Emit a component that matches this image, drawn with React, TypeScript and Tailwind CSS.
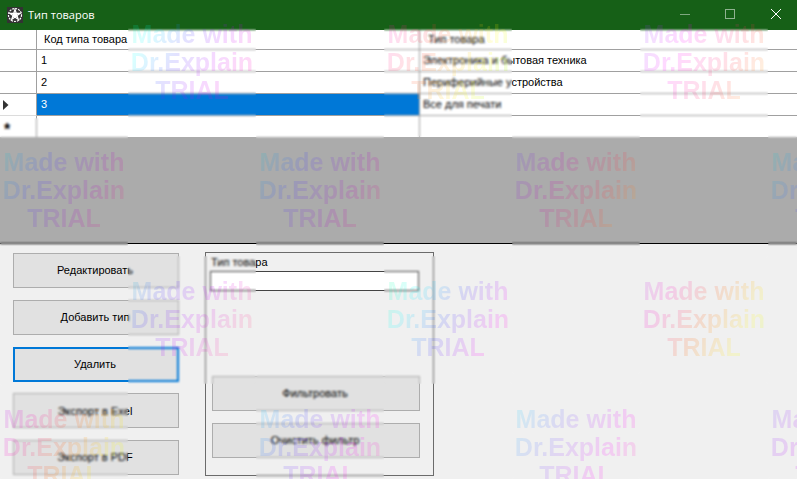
const rows = [
  { id: "1", name: "Электроника и бытовая техника" },
  { id: "2", name: "Периферийные устройства" },
  { id: "3", name: "Все для печати", selected: true },
];

const sideButtons = ["Редактировать", "Добавить тип", "Удалить", "Экспорт в Exel", "Экспорт в PDF"];

// places where the watermark blurs what lies under it
const blurTiles = [
  "left-[128px] top-[26px] h-[111px]",
  "left-[384px] top-[26px] h-[111px]",
  "left-[640px] top-[26px] h-[111px]",
  "left-0 top-[118px] h-[132px]",
  "left-[256px] top-[118px] h-[132px]",
  "left-[512px] top-[118px] h-[132px]",
  "left-[768px] top-[118px] h-[132px]",
  "left-[128px] top-[256px] h-[128px]",
  "left-[384px] top-[256px] h-[128px]",
  "left-[640px] top-[256px] h-[128px]",
  "left-0 top-[384px] h-[95px]",
  "left-[256px] top-[372px] h-[107px]",
  "left-[512px] top-[372px] h-[107px]",
  "left-[768px] top-[372px] h-[107px]",
];

const watermarks = [
  "col-start-2 row-start-1 bg-[linear-gradient(120deg,#00ff80,#00ffff,#4040ff,#c000ff,#ff00c0,#ff4060)]",
  "col-start-4 row-start-1 bg-[linear-gradient(120deg,#ff00ff,#ff4040,#ffff00,#40ff00)]",
  "col-start-6 row-start-1 bg-[linear-gradient(120deg,#6060ff,#ff00ff,#ff4040,#ffff00)]",
  "col-start-1 row-start-2 bg-[linear-gradient(120deg,#00ffc0,#4040ff,#c000c0,#ff6040)]",
  "col-start-3 row-start-2 bg-[linear-gradient(120deg,#00ffc0,#4040ff,#c000c0,#ff6040)]",
  "col-start-5 row-start-2 bg-[linear-gradient(120deg,#4060ff,#c000c0,#ff4040,#ffff00)]",
  "col-start-7 row-start-2 bg-[linear-gradient(120deg,#00ffc0,#4060ff,#c000c0,#ff6040)]",
  "col-start-2 row-start-3 bg-[linear-gradient(120deg,#00ffc0,#4040ff,#c000ff,#ff40a0,#ff8040)]",
  "col-start-4 row-start-3 bg-[linear-gradient(120deg,#00ff60,#00ffff,#4040ff,#ff00ff,#ff4080)]",
  "col-start-6 row-start-3 bg-[linear-gradient(120deg,#a040ff,#ff00c0,#ff6000,#ffff00,#80ff00)]",
  "col-start-1 row-start-4 bg-[linear-gradient(120deg,#8000ff,#ff00c0,#ff6000,#ffff00,#a0ff00)]",
  "col-start-3 row-start-4 bg-[linear-gradient(120deg,#00ffff,#4040ff,#ff00ff,#ff8080)]",
  "col-start-5 row-start-4 bg-[linear-gradient(120deg,#00ffff,#6060ff,#ff00ff,#ff8080)]",
  "col-start-7 row-start-4 bg-[linear-gradient(120deg,#6060ff,#c000ff,#ff00c0,#ff8080)]",
];

const AppIcon = () => (
  <svg width="16" height="16" viewBox="0 0 16 16" className="shrink-0">
    <rect width="16" height="16" fill="#333" />
    <circle cx="8" cy="8" r="6.5" fill="none" stroke="#fff" strokeWidth="1.2" strokeDasharray="2 1" />
    <path d="M8 2.5 L11.3 12.5 L2.8 6.3 H13.2 L4.7 12.5 Z" fill="none" stroke="#fff" strokeWidth="1.2" />
    <path d="M8 5.5 L10.5 7.5 L9.5 10.5 H6.5 L5.5 7.5 Z" fill="#fff" />
  </svg>
);

const TitleBar = () => (
  <div className="flex h-[30px] shrink-0 items-center bg-[#166017] pl-[7px] text-white">
    <AppIcon />
    <span className="ml-[5px] font-['Open_Sans',sans-serif] text-[11px]">Тип товаров</span>
    <div className="ml-auto mb-[2px] flex items-center">
      <div className="h-px w-[10px] bg-[#7fa880] blur-[0.4px]" />
      <div className="ml-[35px] h-[10px] w-[10px] border border-[#8fb290] blur-[0.4px]" />
      <svg width="10" height="10" viewBox="0 0 10 10" className="ml-[36px] mr-[16px]">
        <path d="M0 0 L10 10 M10 0 L0 10" stroke="#fff" strokeWidth="1" />
      </svg>
    </div>
  </div>
);

const ProductGrid = () => (
  <div className="grid h-[107px] shrink-0 grid-cols-[37px_383px_1fr] grid-rows-[20px_22px_22px_22px_21px] bg-white text-[11px] text-black">
    <div className="border-r border-b border-[#a0a0a0]" />
    <div className="flex items-center border-r border-b border-[#a0a0a0] pl-[7px]">Код типа товара</div>
    <div className="flex items-center border-b border-[#a0a0a0] pl-[8px]">Тип товара</div>
    {rows.map((row) => (
      <div className="contents" key={row.id}>
        <div className={`flex items-center border-r border-b border-[#a0a0a0] pl-[3px] ${row.selected ? "border-b-[#dcdcdc]" : ""}`}>
          {row.selected && (
            <svg width="6" height="10" viewBox="0 0 6 10">
              <path d="M0 0 L5.5 5 L0 10 Z" fill="#333" />
            </svg>
          )}
        </div>
        <div className={`flex items-center border-r border-b border-[#a0a0a0] pl-[4px] ${row.selected ? "bg-[#0078d7] text-white" : ""}`}>
          {row.id}
        </div>
        <div className="flex items-center border-b border-[#a0a0a0] pl-[3px]">{row.name}</div>
      </div>
    ))}
    <div className="flex items-center border-r border-[#a0a0a0] pl-[4px] pt-[7px] text-[16px] font-bold leading-none">*</div>
    <div className="border-r border-[#a0a0a0]" />
    <div />
  </div>
);

const FormButton = ({ label, focused }: { label: string; focused?: boolean }) => (
  <button
    className={`flex h-[35px] shrink-0 items-center justify-center bg-[#e1e1e1] pr-[2px] text-[11px] text-black ${
      focused ? "border-2 border-[#0078d7]" : "border border-[#adadad]"
    }`}
  >
    {label}
  </button>
);

const FilterBox = () => (
  <div className="flex h-[224px] w-[229px] flex-col border border-[#6b6b6b] pl-[5px] pr-[13px] text-[11px] text-black">
    <span className="mt-[1px] leading-[16px]">Тип товара</span>
    <input className="-ml-px mt-px h-[20px] w-[209px] shrink-0 border border-[#444] bg-white outline-none" />
    <div className="mt-[85px] ml-px flex flex-col gap-3">
      <FormButton label="Фильтровать" />
      <FormButton label="Очистить фильтр" />
    </div>
  </div>
);

export default function App() {
  return (
    <div className="relative flex h-[479px] w-[797px] flex-col overflow-hidden bg-[#f0f0f0] font-['Liberation_Sans',Arial,sans-serif]">
      <TitleBar />
      <ProductGrid />
      <div className="h-[107px] shrink-0 border-b border-black bg-[#ababab]" />
      <div className="flex gap-[26px] pl-[13px] pt-[8px]">
        <div className="flex w-[166px] flex-col gap-[11.75px] pt-px">
          {sideButtons.map((label) => (
            <FormButton key={label} label={label} focused={label === "Удалить"} />
          ))}
        </div>
        <FilterBox />
      </div>

      {/* trial watermark over the whole page */}
      {blurTiles.map((tile) => (
        <div key={tile} className={`absolute w-[128px] backdrop-blur-[1.2px] ${tile}`} />
      ))}
      <div className="pointer-events-none absolute left-0 top-[-2px] grid grid-cols-[repeat(7,128px)] auto-rows-[128.33px]">
        {watermarks.map((mark) => (
          <div
            key={mark}
            className={`flex h-full flex-col items-center justify-center bg-clip-text text-center text-[25px] font-bold leading-[28px] text-transparent opacity-[.15] ${mark}`}
          >
            <span className="whitespace-nowrap">Made with</span>
            <span className="whitespace-nowrap">Dr.Explain</span>
            <span className="whitespace-nowrap">TRIAL</span>
          </div>
        ))}
      </div>
    </div>
  );
}
